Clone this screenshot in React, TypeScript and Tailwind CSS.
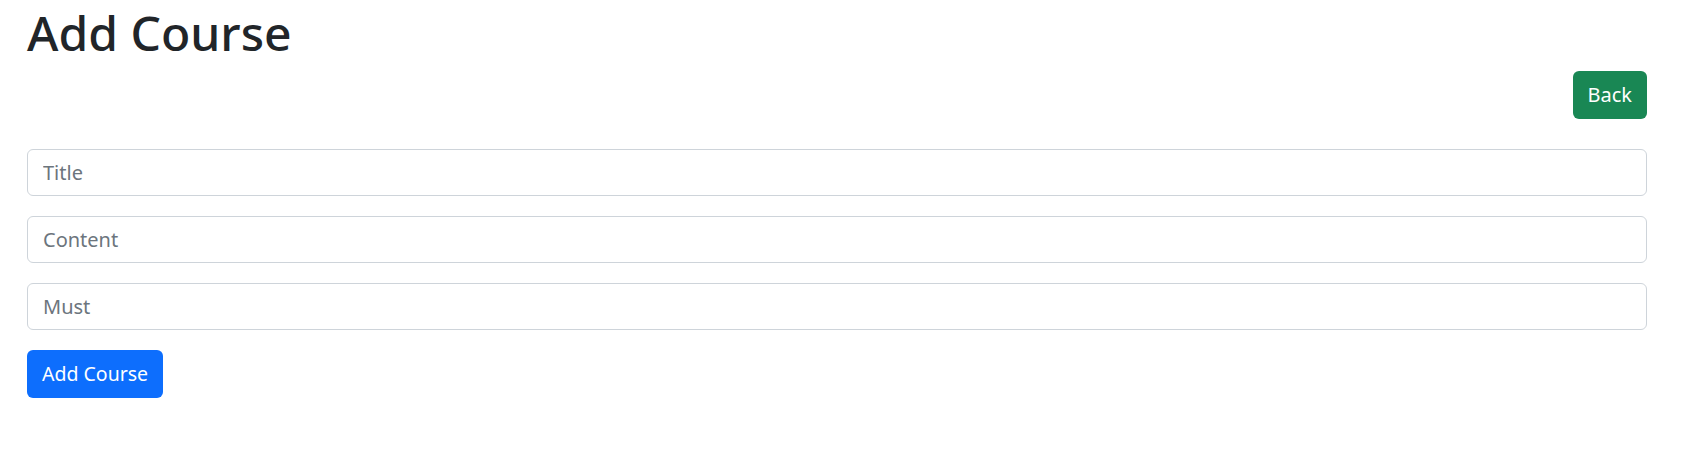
export default function App() {
  return (
    <div className="w-[1698px] h-[470px] bg-white px-[27px] text-[#212529]" style={{ fontFamily: '"Noto Sans", "Open Sans", sans-serif' }}>
      <h1 className="text-[48px] leading-[60px] font-medium m-0 pt-[3px]">Add Course</h1>
      <div className="flex justify-end mt-[8px] pr-[24px]">
        <button className="h-[48px] px-[15px] rounded-[6px] bg-[#198754] text-white text-[20px]">Back</button>
      </div>
      <form className="mt-[30px] pr-[24px] flex flex-col">
        <input placeholder="Title" className="h-[47px] w-full border border-[#ced4da] rounded-[6px] px-[15px] text-[20px] placeholder:text-[#6c757d] outline-none" />
        <input placeholder="Content" className="mt-[20px] h-[47px] w-full border border-[#ced4da] rounded-[6px] px-[15px] text-[20px] placeholder:text-[#6c757d] outline-none" />
        <input placeholder="Must" className="mt-[20px] h-[47px] w-full border border-[#ced4da] rounded-[6px] px-[15px] text-[20px] placeholder:text-[#6c757d] outline-none" />
        <div className="mt-[20px]">
          <button type="button" className="h-[48px] px-[15px] rounded-[6px] bg-[#0d6efd] text-white text-[19.5px]">Add Course</button>
        </div>
      </form>
    </div>
  );
}
